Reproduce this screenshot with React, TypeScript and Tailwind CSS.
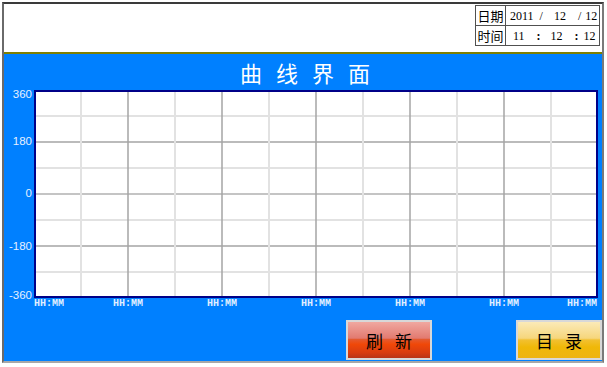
import React from "react";

const cjk = { fontFamily: '"Noto Sans CJK SC", "Liberation Sans", sans-serif' };
const mono = { fontFamily: '"Liberation Mono", "DejaVu Sans Mono", monospace' };
const serif = { fontFamily: '"Liberation Serif", "Times New Roman", serif' };
const sans = { fontFamily: '"Liberation Sans", Arial, sans-serif' };

function Grid() {
  const W = 560;
  const H = 204;
  const vs = [];
  for (let k = 1; k <= 11; k++) {
    const x = 47 * k - 2;
    const major = k % 2 === 0;
    vs.push(
      <line
        key={"v" + k}
        x1={x}
        x2={x}
        y1={0}
        y2={H}
        stroke={major ? "#a4a4a4" : "#e2e2e2"}
        strokeWidth={major ? 1.5 : 2}
      />
    );
  }
  const hs = [];
  for (let k = 1; k <= 7; k++) {
    const y = 26 * k - 2;
    const major = k % 2 === 0;
    hs.push(
      <line
        key={"h" + k}
        x1={0}
        x2={W}
        y1={y}
        y2={y}
        stroke={k === 4 ? "#c4c4c4" : major ? "#a4a4a4" : "#e2e2e2"}
        strokeWidth={k === 4 ? 2 : major ? 1.5 : 2}
      />
    );
  }
  return (
    <svg width={W} height={H} className="block">
      {hs}
      {vs}
    </svg>
  );
}

const yLabels: { t: string; top: number }[] = [
  { t: "360", top: -2 },
  { t: "180", top: 45 },
  { t: "0", top: 97 },
  { t: "-180", top: 150 },
  { t: "-360", top: 199 },
];

const xLabels: number[] = [0, 79, 173, 267, 361, 455, 533];

export default function App() {
  return (
    <div className="w-[607px] h-[367px] bg-white overflow-hidden">
      <div className="ml-[2px] mt-[2px] w-[602px] h-[361px] flex flex-col border-l-2 border-t-2 border-r-2 border-b-2 border-l-[#6a6a6a] border-t-[#3a3a3a] border-r-[#7a7a7a] border-b-[#a8a8a8]">
        {/* header */}
        <div className="h-[48px] bg-white flex justify-end pt-[1px] pr-[2px]">
          <div className="h-[41px] w-[125px] border border-[#505050] flex flex-col bg-white">
            <div className="h-[20px] flex border-b border-[#505050]">
              <div
                className="w-[30px] border-r border-[#505050] flex items-center justify-center text-[13px] leading-none text-black"
                style={cjk}
              >
                日期
              </div>
              <div className="flex-1 flex items-center text-[12px] leading-none text-black whitespace-nowrap" style={serif}>
                <span className="ml-[4px]">2011</span>
                <span className="ml-[6px]">/</span>
                <span className="ml-[11px]">12</span>
                <span className="ml-[12px]">/</span>
                <span className="ml-[4px]">12</span>
              </div>
            </div>
            <div className="flex-1 flex">
              <div
                className="w-[30px] border-r border-[#505050] flex items-center justify-center text-[13px] leading-none text-black"
                style={cjk}
              >
                时间
              </div>
              <div className="flex-1 flex items-center text-[12px] leading-none text-black whitespace-nowrap" style={serif}>
                <span className="ml-[7px]">11</span>
                <span className="ml-[12px] font-bold">:</span>
                <span className="ml-[10px]">12</span>
                <span className="ml-[12px] font-bold">:</span>
                <span className="ml-[5px]">12</span>
              </div>
            </div>
          </div>
        </div>
        <div className="h-[2px] bg-[#7f7f00]" />
        {/* blue panel */}
        <div className="flex-1 bg-[#0080ff] flex flex-col">
          <div className="h-[36px] flex items-center justify-center">
            <span
              className="text-white text-[22px] leading-none tracking-[14px] pl-[18px]"
              style={cjk}
            >
              曲线界面
            </span>
          </div>
          <div className="h-[208px] flex">
            <div className="w-[30px] relative">
              {yLabels.map((l) => (
                <div
                  key={l.t}
                  className="absolute right-[2px] text-[11.5px] leading-[12px] text-[#e6f0ff]"
                  style={{ ...sans, top: l.top }}
                >
                  {l.t}
                </div>
              ))}
            </div>
            <div className="w-[564px] h-[208px] border-2 border-[#000088] bg-white">
              <Grid />
            </div>
          </div>
          <div className="h-[12px] ml-[30px] relative">
            {xLabels.map((left, i) => (
              <div
                key={i}
                className="absolute top-[0px] text-[10px] leading-[12px] text-[#e0efff] w-[30px] font-bold"
                style={{ ...mono, left }}
              >
                HH:MM
              </div>
            ))}
          </div>
          <div className="mt-[10px] flex justify-end gap-[84px]">
            <div className="w-[86px] h-[40px] border-2 border-[#d8d8d8] bg-[linear-gradient(to_bottom,#f0a8a0_0%,#e27a70_45%,#e45a30_48%,#f04808_62%,#d83c10_85%,#b83418_100%)] flex items-center justify-center">
              <span className="text-[17px] text-black tracking-[12px] pl-[12px] leading-none" style={cjk}>
                刷新
              </span>
            </div>
            <div className="w-[86px] h-[40px] border-2 border-[#d8d8d8] bg-[linear-gradient(to_bottom,#fbeab8_0%,#f6d67c_45%,#f2c030_50%,#f0b808_70%,#eeb410_100%)] flex items-center justify-center">
              <span className="text-[17px] text-black tracking-[12px] pl-[12px] leading-none" style={cjk}>
                目录
              </span>
            </div>
          </div>
        </div>
      </div>
    </div>
  );
}
